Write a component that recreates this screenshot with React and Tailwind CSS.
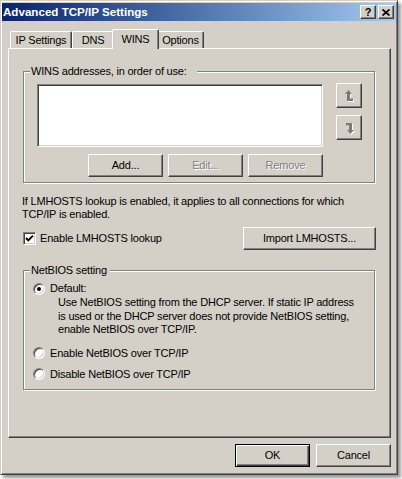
import React from 'react';

// classic 3D frames
const raised =
  'border border-t-white border-l-white border-r-[#404040] border-b-[#404040] shadow-[inset_-1px_-1px_#808080]';
const sunken =
  'border border-t-[#808080] border-l-[#808080] border-r-white border-b-white shadow-[inset_1px_1px_#404040,inset_-1px_-1px_#d4d0c8]';
const etched =
  'border border-[#808080] shadow-[inset_1px_1px_#fff,1px_1px_#fff]';

function Btn({ children, className = '', disabled = false, primary = false }) {
  const frame = primary
    ? 'border border-black shadow-[inset_1px_1px_#fff,inset_-1px_-1px_#404040,inset_-2px_-2px_#808080]'
    : raised;
  const text = disabled ? 'text-[#808080] [text-shadow:1px_1px_0_#fff]' : 'text-black';
  return (
    <button
      type="button"
      className={`flex h-[23px] items-center justify-center bg-[#d4d0c8] text-[11px] leading-[13px] tracking-[-0.2px] ${frame} ${text} ${className}`}
    >
      {children}
    </button>
  );
}

function CaptionBtn({ children }) {
  return (
    <div className={`flex h-[14px] w-[16px] items-center justify-center bg-[#d4d0c8] ${raised}`}>
      {children}
    </div>
  );
}

function Radio({ checked }) {
  return (
    <div className="flex h-[12px] w-[12px] shrink-0 items-center justify-center rounded-full border border-t-[#808080] border-l-[#808080] border-r-white border-b-white bg-white shadow-[inset_1px_1px_#404040,inset_-1px_-1px_#d4d0c8]">
      {checked && <div className="h-[4px] w-[4px] rounded-full bg-black" />}
    </div>
  );
}

function CheckBox() {
  return (
    <div className={`flex h-[13px] w-[13px] shrink-0 items-center justify-center bg-white ${sunken}`}>
      <svg width="9" height="9" viewBox="0 0 9 9">
        <polyline points="1,4 3.3,6.4 8,1.6" fill="none" stroke="#000" strokeWidth="1.9" />
      </svg>
    </div>
  );
}

function UpIcon() {
  return (
    <svg width="9" height="12" viewBox="0 0 9 12" className="drop-shadow-[1px_1px_0_#fff]">
      <polygon points="3.5,0 0,4 7,4" fill="#7a7a7a" />
      <rect x="2" y="4" width="3" height="7" fill="#7a7a7a" />
      <rect x="5" y="8.5" width="3" height="2.5" fill="#7a7a7a" />
    </svg>
  );
}

function DownIcon() {
  return (
    <svg width="9" height="12" viewBox="0 0 9 12" className="drop-shadow-[1px_1px_0_#fff]">
      <rect x="1" y="1" width="3" height="2.5" fill="#7a7a7a" />
      <rect x="4" y="1" width="3" height="7" fill="#7a7a7a" />
      <polygon points="2,8 9,8 5.5,12" fill="#7a7a7a" />
    </svg>
  );
}

const tabs = [
  { label: 'IP Settings', w: 'w-[62px]' },
  { label: 'DNS', w: 'w-[42px]' },
  { label: 'WINS', w: 'w-[47px]', active: true },
  { label: 'Options', w: 'w-[47px]' },
];

export default function App() {
  return (
    <div className="h-[479px] w-[402px] bg-white font-['Liberation_Sans',Arial,sans-serif] text-[11px] leading-[13px] tracking-[-0.2px] text-black">
      <div className="flex h-[475px] w-[398px] flex-col border border-t-[#d4d0c8] border-l-[#d4d0c8] border-r-[#404040] border-b-[#404040] bg-[#d4d0c8] p-px shadow-[inset_1px_1px_#fff,inset_-1px_-1px_#808080,3px_3px_3px_rgba(0,0,0,0.4)]">
        {/* title bar */}
        <div className="mt-px flex h-[18px] items-center justify-between bg-linear-to-r from-[#0a246a] to-[#a6caf0] pl-px pr-[2px]">
          <span className="text-[11.6px] font-bold leading-[14px] tracking-normal text-white">Advanced TCP/IP Settings</span>
          <div className="flex gap-[2px]">
            <CaptionBtn>
              <span className="text-[11px] font-bold leading-none">?</span>
            </CaptionBtn>
            <CaptionBtn>
              <svg width="8" height="7" viewBox="0 0 8 7">
                <path d="M0.5 0.5 L7.5 6.5 M7.5 0.5 L0.5 6.5" stroke="#000" strokeWidth="1.7" />
              </svg>
            </CaptionBtn>
          </div>
        </div>

        {/* tabs */}
        <div className="ml-[8px] mt-[8px] flex h-[19px] items-end">
          {tabs.map((t) => (
            <div
              key={t.label}
              className={
                t.active
                  ? `${t.w} relative z-10 -mx-[2px] -mb-px h-[20px] rounded-t-[2px] border-t border-l border-r border-t-white border-l-white border-r-[#404040] bg-[#d4d0c8] pt-[3px] text-center shadow-[inset_-1px_0_#808080]`
                  : `${t.w} h-[17px] rounded-t-[2px] border-t border-l border-r border-t-white border-l-white border-r-[#404040] pt-[2px] text-center shadow-[inset_-1px_0_#808080]`
              }
            >
              {t.label}
            </div>
          ))}
        </div>

        {/* tab page */}
        <div className={`ml-[6px] flex h-[390px] w-[383px] flex-col ${raised}`}>
          <fieldset className={`ml-[14px] mt-[16px] w-[352px] pb-[5px] ${etched}`}>
            <legend className="ml-[6px] bg-[#d4d0c8] pl-px pr-[10px] leading-[13px]">
              WINS addresses, in order of use:
            </legend>
            <div className="ml-[13px] mt-[5px] flex items-start">
              <div className={`mt-px h-[63px] w-[286px] bg-white ${sunken}`} />
              <div className="ml-[13px] flex flex-col gap-[7px]">
                <Btn className="h-[25px] w-[26px]">
                  <UpIcon />
                </Btn>
                <Btn className="h-[25px] w-[26px]">
                  <DownIcon />
                </Btn>
              </div>
            </div>
            <div className="ml-[64px] mt-[7px] flex gap-[5px]">
              <Btn className="w-[75px]">Add...</Btn>
              <Btn className="w-[75px]" disabled>Edit...</Btn>
              <Btn className="w-[75px]" disabled>Remove</Btn>
            </div>
          </fieldset>

          <p className="ml-[13px] mt-[12px]">
            If LMHOSTS lookup is enabled, it applies to all connections for which
            <br />
            TCP/IP is enabled.
          </p>

          <div className="mt-[6px] flex h-[23px] items-center pl-[14px] pr-[14px]">
            <CheckBox />
            <span className="ml-[4px]">Enable LMHOSTS lookup</span>
            <Btn className="ml-auto w-[133px]">Import LMHOSTS...</Btn>
          </div>

          <fieldset className={`ml-[14px] mt-[14px] w-[352px] pb-[8px] ${etched}`}>
            <legend className="ml-[6px] bg-[#d4d0c8] pl-px pr-[3px] leading-[13px]">NetBIOS setting</legend>
            <div className="ml-[9px] mt-[5px] flex h-[13px] items-center">
              <Radio checked />
              <span className="ml-[5px]">Default:</span>
            </div>
            <p className="ml-[34px] mt-px leading-[13.5px]">
              Use NetBIOS setting from the DHCP server. If static IP address
              <br />
              is used or the DHCP server does not provide NetBIOS setting,
              <br />
              enable NetBIOS over TCP/IP.
            </p>
            <div className="ml-[9px] mt-[10px] flex h-[13px] items-center">
              <Radio />
              <span className="ml-[5px]">Enable NetBIOS over TCP/IP</span>
            </div>
            <div className="ml-[9px] mt-[8px] flex h-[13px] items-center">
              <Radio />
              <span className="ml-[5px]">Disable NetBIOS over TCP/IP</span>
            </div>
          </fieldset>
        </div>

        {/* dialog buttons */}
        <div className="mr-[5px] mt-[6px] flex justify-end gap-[6px]">
          <Btn className="w-[75px]" primary>OK</Btn>
          <Btn className="w-[75px]">Cancel</Btn>
        </div>
      </div>
    </div>
  );
}
